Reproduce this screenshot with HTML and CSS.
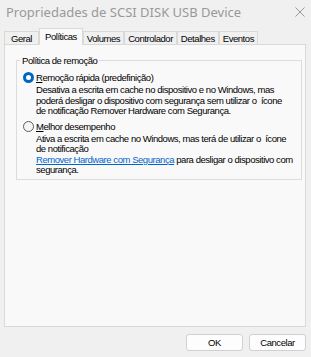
FILE: index.html
```html
<!DOCTYPE html>
<html>
    <head>
        <link rel="stylesheet" href="styles.css">
    </head>
    <body>
        <div class="window">
            <div class="titlebar">
                <span class="title">Propriedades de SCSI DISK USB Device</span>
                <svg class="close" width="10" height="10" viewBox="0 0 10 10">
                    <path d="M0.5 0.5 L9.5 9.5 M9.5 0.5 L0.5 9.5" stroke="#9a9a9a" stroke-width="1" fill="none"/>
                </svg>
            </div>
            <div class="tabs">
                <div class="tab">Geral</div>
                <div class="tab active">Políticas</div>
                <div class="tab">Volumes</div>
                <div class="tab">Controlador</div>
                <div class="tab">Detalhes</div>
                <div class="tab">Eventos</div>
            </div>
            <div class="panel">
                <fieldset class="group">
                    <legend>Política de remoção</legend>
                    <div class="option">
                        <span class="radio checked"></span>
                        <span class="label"><u>R</u>emoção rápida (predefinição)</span>
                    </div>
                    <p class="desc">Desativa a escrita em cache no dispositivo e no Windows, mas<br>poderá desligar o dispositivo com segurança sem utilizar o&nbsp; ícone<br>de notificação Remover Hardware com Segurança.</p>
                    <div class="option second">
                        <span class="radio"></span>
                        <span class="label"><u>M</u>elhor desempenho</span>
                    </div>
                    <p class="desc">Ativa a escrita em cache no Windows, mas terá de utilizar o&nbsp; ícone<br>de notificação<br><a href="#">Remover Hardware com Segurança</a> para desligar o dispositivo com<br>segurança.</p>
                </fieldset>
            </div>
            <div class="footer">
                <button class="btn">OK</button>
                <button class="btn">Cancelar</button>
            </div>
        </div>
    </body>
</html>
```

FILE: styles.css
```css
body {
    margin: 0;
    background-color: #f0f0f0;
    overflow: hidden;
}
.window {
    width: 311px;
    height: 357px;
    display: flex;
    flex-direction: column;
    font-family: 'Liberation Sans', sans-serif;
    font-size: 9.5px;
    letter-spacing: -0.45px;
    color: #000000;
}
.titlebar {
    height: 28px;
    box-sizing: border-box;
    display: flex;
    align-items: flex-start;
    justify-content: space-between;
    padding: 3px 6px 0 6px;
}
.title {
    font-family: 'Noto Sans', sans-serif;
    font-size: 13px;
    letter-spacing: 0;
    color: #999999;
}
.close {
    margin-top: 4px;
}
.tabs {
    display: flex;
    align-items: flex-end;
    height: 17px;
    margin: 0 0 -1px 4px;
}
.tab {
    height: 13px;
    min-width: 27px;
    line-height: 14px;
    padding: 0 3px;
    text-align: center;
    border: 1px solid #d9d9d9;
    border-bottom: none;
    background-color: #f0f0f0;
}
.tab.active {
    height: 16px;
    line-height: 15px;
    padding: 0 5px;
    background-color: #f9f9f9;
    position: relative;
    z-index: 1;
}
.panel {
    height: 283px;
    box-sizing: border-box;
    margin: 0 5px 0 4px;
    border: 1px solid #d9d9d9;
    background-color: #f9f9f9;
    padding: 10px 9px 0 11px;
}
.group {
    margin: 0;
    padding: 5px 8px 3px 6px;
    border: 1px solid #dcdcdc;
    border-radius: 0;
}
.group legend {
    padding: 0 2px;
    margin-left: -3px;
}
.option {
    display: flex;
    align-items: center;
    height: 13px;
}
.option.second {
    margin-top: 3px;
}
.radio {
    width: 11px;
    height: 11px;
    box-sizing: border-box;
    border-radius: 50%;
    border: 1px solid #5c5c5c;
    background-color: #f5f5f5;
    margin-right: 2px;
}
.radio.checked {
    border: 3px solid #0067c0;
    background-color: #ffffff;
}
.desc {
    margin: 1px 0 0 13px;
    line-height: 10.5px;
    white-space: nowrap;
}
.desc a {
    color: #0066cc;
}
.footer {
    display: flex;
    justify-content: flex-end;
    gap: 6px;
    padding: 7px 5px 0 0;
}
.btn {
    width: 57px;
    height: 17px;
    padding: 0;
    border: 1px solid #d0d0d0;
    border-radius: 3px;
    background-color: #fdfdfd;
    font-family: 'Liberation Sans', sans-serif;
    font-size: 9.5px;
    letter-spacing: -0.45px;
    color: #000000;
}
```
